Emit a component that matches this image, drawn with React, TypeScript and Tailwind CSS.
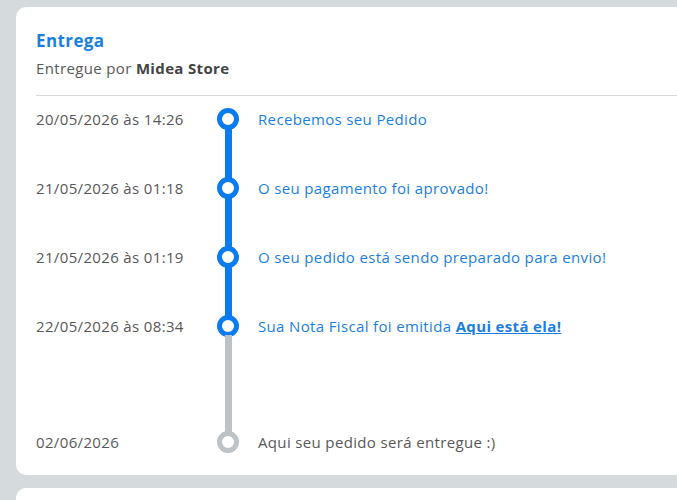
import React from "react";

type Step = {
    date: string;
    label: React.ReactNode;
    done: boolean;
    lineDone: boolean;
    height: string;
    last?: boolean;
};

const steps: Step[] = [
    { date: "20/05/2026 às 14:26", label: "Recebemos seu Pedido", done: true, lineDone: true, height: "h-[69px]" },
    { date: "21/05/2026 às 01:18", label: "O seu pagamento foi aprovado!", done: true, lineDone: true, height: "h-[69px]" },
    { date: "21/05/2026 às 01:19", label: "O seu pedido está sendo preparado para envio!", done: true, lineDone: true, height: "h-[69px]" },
    {
        date: "22/05/2026 às 08:34",
        label: (
            <>
                Sua Nota Fiscal foi emitida{" "}
                <a href="#" className="font-bold underline">Aqui está ela!</a>
            </>
        ),
        done: true,
        lineDone: false,
        height: "h-[116px]",
    },
    { date: "02/06/2026", label: "Aqui seu pedido será entregue :)", done: false, lineDone: false, height: "h-[22px]", last: true },
];

const TimelineRow = ({ step }: { step: Step }) => (
    <div className={`flex ${step.height}`}>
        <div className="w-[180px] h-[22px] leading-[22px] text-[#585858]">{step.date}</div>
        <div className="flex flex-col items-center w-[24px]">
            <div
                className={`w-[22px] h-[22px] shrink-0 rounded-full border-[5px] bg-white ${step.done ? "border-[#0b7cf0]" : "border-[#bcc2c6]"}`}
            />
            {!step.last && (
                <div className={`w-[7px] flex-1 -my-[2px] ${step.lineDone ? "bg-[#0b7cf0]" : "bg-[#bcc2c6]"}`} />
            )}
        </div>
        <div className={`ml-[18px] h-[22px] leading-[22px] ${step.done ? "text-[#1a7fe4]" : "text-[#585858]"}`}>
            {step.label}
        </div>
    </div>
);

export default function App() {
    return (
        <div className="min-h-[500px] bg-[#d5dadd] pt-[7px] overflow-hidden" style={{ fontFamily: "'Open Sans', 'Liberation Sans', sans-serif" }}>
            <div className="ml-4 mr-[-20px] bg-white rounded-[10px] pl-5 pt-[22px] pb-[22px] text-[15px] tracking-[0.35px]">
                <h2 className="text-[17px] leading-6 font-bold tracking-[0.4px] text-[#1a7fe4]">Entrega</h2>
                <p className="mt-[5px] leading-5 text-[#585858]">
                    Entregue por <span className="font-bold text-[#444]">Midea Store</span>
                </p>
                <div className="mt-[17px] border-t border-[#d6d9dc]" />
                <div className="mt-[12px]">
                    {steps.map((step) => (
                        <TimelineRow key={step.date} step={step} />
                    ))}
                </div>
            </div>
            <div className="ml-4 mr-[-20px] mt-[13px] h-[40px] bg-white rounded-[10px]" />
        </div>
    );
}
